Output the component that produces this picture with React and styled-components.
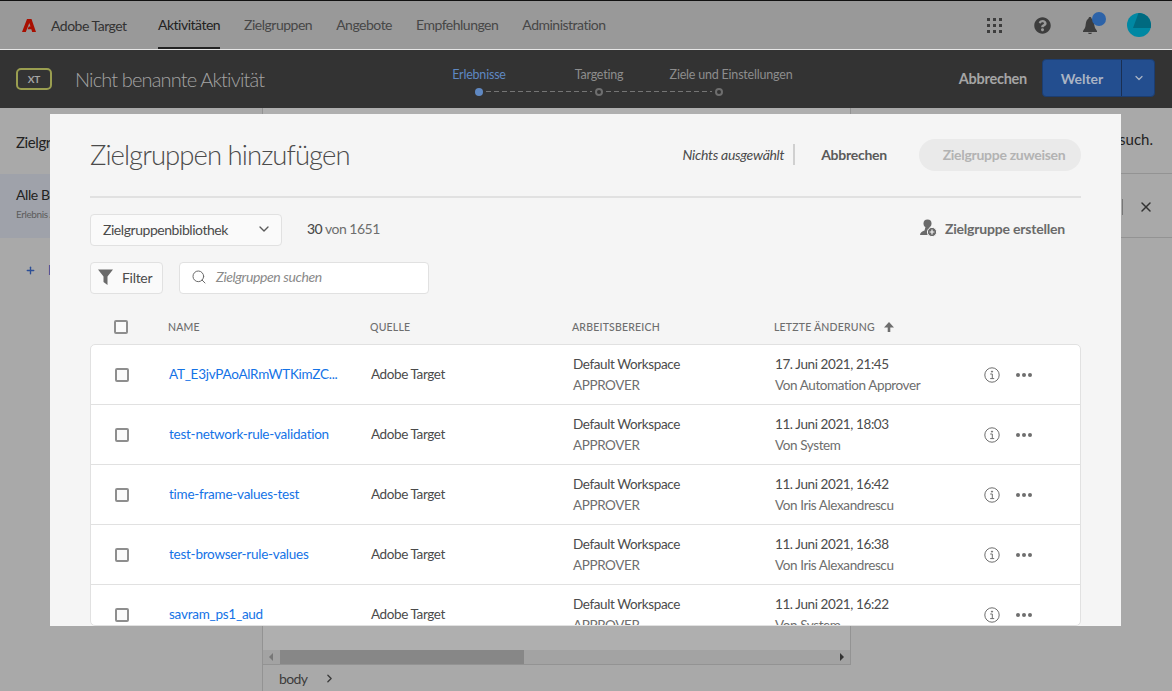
import React from 'react';
import styled, { createGlobalStyle } from 'styled-components';
import { ChevronDown, ChevronRight, Search, X, Plus } from 'lucide-react';
import { FaQuestionCircle } from 'react-icons/fa';

const FONT = `Lato, "Open Sans", "Liberation Sans", sans-serif`;

const GlobalStyle = createGlobalStyle`
  html, body {
    margin: 0;
    padding: 0;
    height: 100%;
    overflow: hidden;
    font-family: ${FONT};
  }
  * { box-sizing: border-box; }
`;

const Page = styled.div`
  position: relative;
  width: 1172px;
  height: 691px;
  display: flex;
  flex-direction: column;
  background: #a9a9a9;
  overflow: hidden;
`;

/* top navigation */
const TopNav = styled.header`
  height: 50px;
  flex: none;
  display: flex;
  align-items: stretch;
  background: #999;
  border-top: 1px solid #111;
  border-bottom: 1px solid #e6e6e6;
  padding: 0 21px 0 22px;
`;

const Brand = styled.div`
  display: flex;
  align-items: center;
  gap: 15px;
  width: 136px;
  font-size: 14px;
  color: #333;
  letter-spacing: -0.5px;
`;

const NavList = styled.nav`
  display: flex;
  gap: 24px;
  flex: 1;
`;

const NavItem = styled.a`
  display: flex;
  align-items: center;
  font-size: 14px;
  letter-spacing: -0.5px;
  color: ${p => (p.$active ? '#222' : '#474747')};
  border-bottom: 2px solid ${p => (p.$active ? '#222' : 'transparent')};
`;

const NavTools = styled.div`
  display: flex;
  align-items: center;
  color: #3d3d3d;
`;

const AppGrid = styled.div`
  display: grid;
  grid-template-columns: repeat(3, 3px);
  gap: 3px;
  margin-right: 32px;
  span {
    width: 3px;
    height: 3px;
    background: #3d3d3d;
  }
`;

const BellWrap = styled.div`
  position: relative;
  display: flex;
  margin: 0 30px 0 32px;
`;

const Badge = styled.span`
  position: absolute;
  top: -5px;
  left: 9px;
  width: 14px;
  height: 14px;
  border-radius: 50%;
  background: #2d63a8;
`;

/* activity bar */
const ActivityBar = styled.div`
  height: 58px;
  flex: none;
  display: grid;
  grid-template-columns: 419px 360px 1fr;
  align-items: center;
  background: #333;
  padding-left: 16px;
`;

const ActivityTitle = styled.div`
  display: flex;
  align-items: center;
  gap: 23px;
  font-size: 20px;
  font-weight: 300;
  color: #a3a3a3;
  letter-spacing: -0.85px;
`;

const TypeBadge = styled.span`
  width: 36px;
  height: 22px;
  display: flex;
  align-items: center;
  justify-content: center;
  border: 2px solid #9a9e50;
  border-radius: 5px;
  font-size: 10px;
  font-weight: 700;
  letter-spacing: 0;
  color: #a5a5a5;
`;

const Steps = styled.div`
  display: flex;
  flex-direction: column;
  gap: 6px;
  margin-left: -16px;
  padding-top: 4px;
`;

const StepLabels = styled.div`
  display: grid;
  grid-template-columns: repeat(3, 120px);
`;

const StepLabel = styled.span`
  justify-self: center;
  white-space: nowrap;
  margin-left: ${p => p.$shift || 0}px;
  font-size: 12.5px;
  letter-spacing: -0.2px;
  color: ${p => (p.$active ? '#5f88c2' : '#8d8d8d')};
`;

const StepTrack = styled.div`
  display: flex;
  align-items: center;
  width: 248px;
  margin-left: 56px;
`;

const StepDot = styled.span`
  flex: none;
  width: 8px;
  height: 8px;
  border-radius: 50%;
  background: ${p => (p.$active ? '#5f88c2' : 'transparent')};
  border: ${p => (p.$active ? 'none' : '2px solid #6e6e6e')};
`;

const StepDash = styled.span`
  flex: 1;
  height: 1px;
  margin: 0 3px;
  background: repeating-linear-gradient(90deg, #757575 0 5px, transparent 5px 8px);
`;

const ActivityActions = styled.div`
  display: flex;
  align-items: center;
  justify-content: flex-end;
  gap: 15px;
  padding: 0 17px 2px 0;
`;

const GhostAction = styled.span`
  font-size: ${p => p.$size || 14}px;
  font-weight: 700;
  color: ${p => p.$color || '#a5a5a5'};
  letter-spacing: -0.25px;
`;

const SplitButton = styled.div`
  display: grid;
  grid-template-columns: 79px 34px;
  width: 113px;
  height: 38px;
  background: #234e8f;
  border: 1px solid #1c3d70;
  border-radius: 4px;
  color: #aab4c4;
`;

const SplitMain = styled.span`
  display: flex;
  align-items: center;
  justify-content: center;
  font-size: 14px;
  font-weight: 700;
  border-right: 1px solid #1a2f52;
`;

const SplitCaret = styled.span`
  display: flex;
  align-items: center;
  justify-content: center;
`;

/* page behind the dialog */
const Workspace = styled.div`
  flex: 1;
  min-height: 0;
  display: grid;
  grid-template-columns: 262px 589px 1fr;
`;

const LeftPanel = styled.aside`
  display: flex;
  flex-direction: column;
  font-size: 14px;
  letter-spacing: -0.4px;
  color: #222;
`;

const PanelHeading = styled.div`
  height: 66px;
  display: flex;
  align-items: center;
  padding: 2px 16px 0;
  font-size: 15px;
`;

const ExperienceRow = styled.div`
  height: 64px;
  display: flex;
  flex-direction: column;
  justify-content: center;
  gap: 5px;
  padding: 0 16px 7px;
  background: #9fa2aa;
  small {
    font-size: 10px;
    color: #5c5c5c;
  }
`;

const AddRow = styled.div`
  display: flex;
  align-items: center;
  gap: 12px;
  padding: 24px 25px;
  color: #2d4f96;
  font-weight: 700;
  font-size: 13px;
`;

const CenterPanel = styled.main`
  display: flex;
  flex-direction: column;
  min-height: 0;
`;

const Editor = styled.div`
  flex: 1;
  background: #afafaf;
  border-left: 1px solid #939393;
  border-right: 1px solid #939393;
`;

const ScrollBar = styled.div`
  height: 15px;
  display: flex;
  align-items: center;
  background: #a3a3a3;
  border-left: 1px solid #939393;
  border-right: 1px solid #939393;
  border-bottom: 1px solid #939393;
  padding: 0 6px;
  gap: 5px;
`;

const ScrollArrow = styled.span`
  width: 0;
  height: 0;
  border-top: 4px solid transparent;
  border-bottom: 4px solid transparent;
  ${p => (p.$right
    ? 'border-left: 4px solid #333; margin-left: auto;'
    : 'border-right: 4px solid #777;')}
`;

const ScrollThumb = styled.span`
  width: 244px;
  height: 14px;
  margin-left: 2px;
  background: #878787;
`;

const PathBar = styled.div`
  height: 26px;
  display: flex;
  align-items: center;
  gap: 16px;
  padding: 0 16px;
  border-left: 1px solid #939393;
  font-size: 14px;
  letter-spacing: -0.6px;
  color: #3c3c3c;
`;

const RightPanel = styled.aside`
  display: flex;
  flex-direction: column;
  font-size: 15px;
  color: #222;
`;

const RightNote = styled.div`
  height: 66px;
  display: flex;
  align-items: center;
  justify-content: flex-end;
  padding: 0 19px 3px 0;
  border-bottom: 1px solid #939393;
`;

const RightRow = styled.div`
  height: 64px;
  display: flex;
  align-items: center;
  justify-content: flex-end;
  gap: 15px;
  padding: 3px 18px 0 0;
  border-bottom: 1px solid #939393;
  color: #333;
  i {
    width: 1px;
    height: 16px;
    background: #777;
  }
`;

/* dialog */
const Dialog = styled.section`
  position: absolute;
  left: 50px;
  top: 114px;
  width: 1071px;
  height: 512px;
  display: flex;
  flex-direction: column;
  padding: 0 40px;
  background: #f5f5f5;
  overflow: hidden;
`;

const DialogHead = styled.div`
  height: 84px;
  flex: none;
  display: flex;
  align-items: center;
  border-bottom: 2px solid #e1e1e1;
  padding-bottom: 1px;
`;

const DialogTitle = styled.h2`
  flex: 1;
  margin: 0;
  font-size: 27.5px;
  font-weight: 300;
  color: #4b4b4b;
  letter-spacing: -0.95px;
`;

const SelectionNote = styled.span`
  font-size: 14px;
  font-style: italic;
  color: #4b4b4b;
  letter-spacing: -0.3px;
  padding-right: 9px;
  margin-right: 26px;
  border-right: 2px solid #d0d0d0;
  line-height: 21px;
`;

const AssignPill = styled.span`
  width: 162px;
  height: 32px;
  margin-left: 32px;
  padding-left: 8px;
  display: flex;
  align-items: center;
  justify-content: center;
  border-radius: 16px;
  background: #eaeaea;
  font-size: 14px;
  font-weight: 700;
  color: #b3b3b3;
  letter-spacing: -0.3px;
`;

const ToolRow = styled.div`
  flex: none;
  display: flex;
  align-items: center;
  margin-top: ${p => p.$top}px;
  height: 32px;
`;

const SelectBox = styled.div`
  width: 192px;
  height: 32px;
  display: flex;
  align-items: center;
  justify-content: space-between;
  padding: 0 9px 2px 12px;
  background: #fafafa;
  border: 1px solid #e1e1e1;
  border-radius: 4px;
  font-size: 14px;
  color: #4b4b4b;
  letter-spacing: -0.45px;
`;

const Count = styled.span`
  margin-left: 25px;
  padding-bottom: 3px;
  flex: 1;
  font-size: 14px;
  letter-spacing: -0.5px;
  color: #6e6e6e;
  b {
    font-weight: 500;
    color: #4b4b4b;
  }
`;

const CreateLink = styled.span`
  display: flex;
  align-items: center;
  gap: 8px;
  padding: 0 16px 4px 0;
  font-size: 14px;
  font-weight: 700;
  color: #6a6a6a;
  letter-spacing: -0.2px;
`;

const FilterButton = styled.div`
  width: 73px;
  height: 32px;
  display: flex;
  align-items: center;
  gap: 9px;
  padding: 0 0 2px 7px;
  background: #fafafa;
  border: 1px solid #e1e1e1;
  border-radius: 4px;
  font-size: 14px;
  color: #4b4b4b;
  letter-spacing: -0.3px;
`;

const SearchBox = styled.div`
  width: 250px;
  height: 32px;
  margin-left: 16px;
  display: flex;
  align-items: center;
  gap: 9px;
  padding: 0 0 3px 11px;
  background: #fff;
  border: 1px solid #e1e1e1;
  border-radius: 4px;
  font-size: 14px;
  font-style: italic;
  color: #8a8a8a;
  letter-spacing: -0.4px;
`;

const columns = '54px 202px 202px 202px 209px 32px 1fr';

const TableHead = styled.div`
  flex: none;
  height: 50px;
  display: grid;
  grid-template-columns: ${columns};
  align-items: center;
  padding: 16px 0 0 24px;
  font-size: 10.5px;
  font-weight: 500;
  letter-spacing: 0.2px;
  text-transform: uppercase;
  color: #6e6e6e;
`;

const SortCell = styled.span`
  display: flex;
  align-items: center;
  gap: 9px;
  white-space: nowrap;
`;

const Card = styled.div`
  flex: 1;
  min-height: 0;
  overflow: hidden;
  background: #fff;
  border: 1px solid #e1e1e1;
  border-radius: 5px;
`;

const Row = styled.div`
  height: 60px;
  display: grid;
  grid-template-columns: ${columns};
  align-items: center;
  padding-left: 24px;
  border-bottom: 1px solid #e1e1e1;
  font-size: 13.5px;
  color: #4b4b4b;
  letter-spacing: -0.4px;
`;

const Checkbox = styled.span`
  display: block;
  width: 14px;
  height: 14px;
  background: #fafafa;
  border: 2px solid #8e8e8e;
  border-radius: 2px;
`;

const NameLink = styled.a`
  color: #1473e6;
  padding-bottom: 2px;
  letter-spacing: -0.25px;
  white-space: nowrap;
`;

const Source = styled.span`
  padding-bottom: 2px;
  white-space: nowrap;
`;

const Lines = styled.div`
  display: flex;
  flex-direction: column;
  gap: 3px;
  padding-bottom: 1px;
  line-height: 18px;
  white-space: nowrap;
  span + span {
    color: #6e6e6e;
  }
`;

const Dots = styled.span`
  display: flex;
  gap: 2px;
  i {
    width: 4px;
    height: 4px;
    border-radius: 50%;
    background: #6e6e6e;
  }
`;

const AdobeLogo = () => (
  <svg width="14" height="13" viewBox="0 0 14 13" fill="#a80f00">
    <path d="M5 0H9.5L14 13H10.2L9.3 10.2H5.6L6.8 7.4H8.5L7.3 4 3.8 13H0z" />
  </svg>
);

const BellIcon = () => (
  <svg width="14" height="17" viewBox="0 0 14 17" fill="#3d3d3d">
    <path d="M7 0c1 0 1.5.7 1.5 1.5C11 3 11 6 11.5 9c.3 2 1.5 3.5 2.5 5v1H0v-1c1-1.5 2.2-3 2.5-5C3 6 3 3 5.5 1.5 5.5.7 6 0 7 0zM5 15.8h4c0 .8-1 1.2-2 1.2s-2-.4-2-1.2z" />
  </svg>
);

const Avatar = () => (
  <svg width="24" height="24" viewBox="0 0 24 24">
    <circle cx="12" cy="12" r="12" fill="#0088a3" />
    <path d="M11.5 0A12 12 0 0 1 24 12.5L23.7 15H6z" fill="#006a80" />
  </svg>
);

const FunnelIcon = () => (
  <svg width="15" height="16" viewBox="0 0 15 16" fill="#6a6a6a">
    <path d="M0 .5h15L9.5 7.5V16L5.5 13V7.5z" />
  </svg>
);

const InfoIcon = () => (
  <svg width="16" height="16" viewBox="0 0 16 16" fill="none" stroke="#6e6e6e">
    <circle cx="8" cy="8" r="7.2" />
    <path d="M6.2 7h2.1v4.4M6.2 11.6h4" />
    <circle cx="8" cy="4.6" r=".6" fill="#6e6e6e" />
  </svg>
);

const UserPlusIcon = () => (
  <svg width="17" height="18" viewBox="0 0 17 18">
    <circle cx="7.5" cy="4.5" r="4" fill="#6a6a6a" />
    <path d="M0 16c0-2.5 2-3.5 4.5-4.5L5.5 8h4l.7 2.5C8.5 11.5 7.5 13.5 7.6 16z" fill="#6a6a6a" />
    <circle cx="12" cy="13" r="4.6" fill="#6a6a6a" stroke="#f5f5f5" />
    <path d="M12 10.6v4.8M9.6 13h4.8" stroke="#f5f5f5" strokeWidth="1.2" />
  </svg>
);

const SortArrow = () => (
  <svg width="10" height="10" viewBox="0 0 10 10" fill="#6e6e6e">
    <path d="M5 0 10 5.5H6.3V10H3.7V5.5H0z" />
  </svg>
);

const audiences = [
  { name: 'AT_E3jvPAoAlRmWTKimZC...', date: '17. Juni 2021, 21:45', by: 'Von Automation Approver' },
  { name: 'test-network-rule-validation', date: '11. Juni 2021, 18:03', by: 'Von System' },
  { name: 'time-frame-values-test', date: '11. Juni 2021, 16:42', by: 'Von Iris Alexandrescu' },
  { name: 'test-browser-rule-values', date: '11. Juni 2021, 16:38', by: 'Von Iris Alexandrescu' },
  { name: 'savram_ps1_aud', date: '11. Juni 2021, 16:22', by: 'Von System' },
];

const navItems = ['Aktivitäten', 'Zielgruppen', 'Angebote', 'Empfehlungen', 'Administration'];

const App = () => {
  return (
    <Page>
      <GlobalStyle />
      <TopNav>
        <Brand>
          <AdobeLogo />
          Adobe Target
        </Brand>
        <NavList>
          {navItems.map((item, i) => (
            <NavItem key={item} $active={i === 0}>{item}</NavItem>
          ))}
        </NavList>
        <NavTools>
          <AppGrid>
            {Array.from({ length: 9 }).map((_, i) => <span key={i} />)}
          </AppGrid>
          <FaQuestionCircle size={17} />
          <BellWrap>
            <BellIcon />
            <Badge />
          </BellWrap>
          <Avatar />
        </NavTools>
      </TopNav>

      <ActivityBar>
        <ActivityTitle>
          <TypeBadge>XT</TypeBadge>
          Nicht benannte Aktivität
        </ActivityTitle>
        <Steps>
          <StepLabels>
            <StepLabel $active>Erlebnisse</StepLabel>
            <StepLabel>Targeting</StepLabel>
            <StepLabel $shift={24}>Ziele und Einstellungen</StepLabel>
          </StepLabels>
          <StepTrack>
            <StepDot $active />
            <StepDash />
            <StepDot />
            <StepDash />
            <StepDot />
          </StepTrack>
        </Steps>
        <ActivityActions>
          <GhostAction $size={14.5}>Abbrechen</GhostAction>
          <SplitButton>
            <SplitMain>Welter</SplitMain>
            <SplitCaret><ChevronDown size={12} strokeWidth={2.5} /></SplitCaret>
          </SplitButton>
        </ActivityActions>
      </ActivityBar>

      <Workspace>
        <LeftPanel>
          <PanelHeading>Zielgruppe</PanelHeading>
          <ExperienceRow>
            Alle Besucher
            <small>Erlebnis A</small>
          </ExperienceRow>
          <AddRow>
            <Plus size={11} strokeWidth={3} />
            Erlebnis
          </AddRow>
        </LeftPanel>
        <CenterPanel>
          <Editor />
          <ScrollBar>
            <ScrollArrow />
            <ScrollThumb />
            <ScrollArrow $right />
          </ScrollBar>
          <PathBar>
            body
            <ChevronRight size={13} strokeWidth={2.5} />
          </PathBar>
        </CenterPanel>
        <RightPanel>
          <RightNote>Besucher pro Versuch.</RightNote>
          <RightRow>
            <i />
            <X size={16} strokeWidth={2.25} />
          </RightRow>
        </RightPanel>
      </Workspace>

      <Dialog>
        <DialogHead>
          <DialogTitle>Zielgruppen hinzufügen</DialogTitle>
          <SelectionNote>Nichts ausgewählt</SelectionNote>
          <GhostAction $color="#5a5a5a">Abbrechen</GhostAction>
          <AssignPill>Zielgruppe zuweisen</AssignPill>
        </DialogHead>

        <ToolRow $top={16}>
          <SelectBox>
            Zielgruppenbibliothek
            <ChevronDown size={16} color="#5a5a5a" />
          </SelectBox>
          <Count><b>30</b> von 1651</Count>
          <CreateLink>
            <UserPlusIcon />
            Zielgruppe erstellen
          </CreateLink>
        </ToolRow>

        <ToolRow $top={16}>
          <FilterButton>
            <FunnelIcon />
            Filter
          </FilterButton>
          <SearchBox>
            <Search size={16} strokeWidth={1.5} color="#6a6a6a" />
            Zielgruppen suchen
          </SearchBox>
        </ToolRow>

        <TableHead>
          <Checkbox />
          <span>Name</span>
          <span>Quelle</span>
          <span>Arbeitsbereich</span>
          <SortCell>Letzte Änderung <SortArrow /></SortCell>
        </TableHead>

        <Card>
          {audiences.map(a => (
            <Row key={a.name}>
              <Checkbox />
              <NameLink>{a.name}</NameLink>
              <Source>Adobe Target</Source>
              <Lines>
                <span>Default Workspace</span>
                <span>APPROVER</span>
              </Lines>
              <Lines>
                <span>{a.date}</span>
                <span>{a.by}</span>
              </Lines>
              <InfoIcon />
              <Dots><i /><i /><i /></Dots>
            </Row>
          ))}
        </Card>
      </Dialog>
    </Page>
  );
};

export default App;
